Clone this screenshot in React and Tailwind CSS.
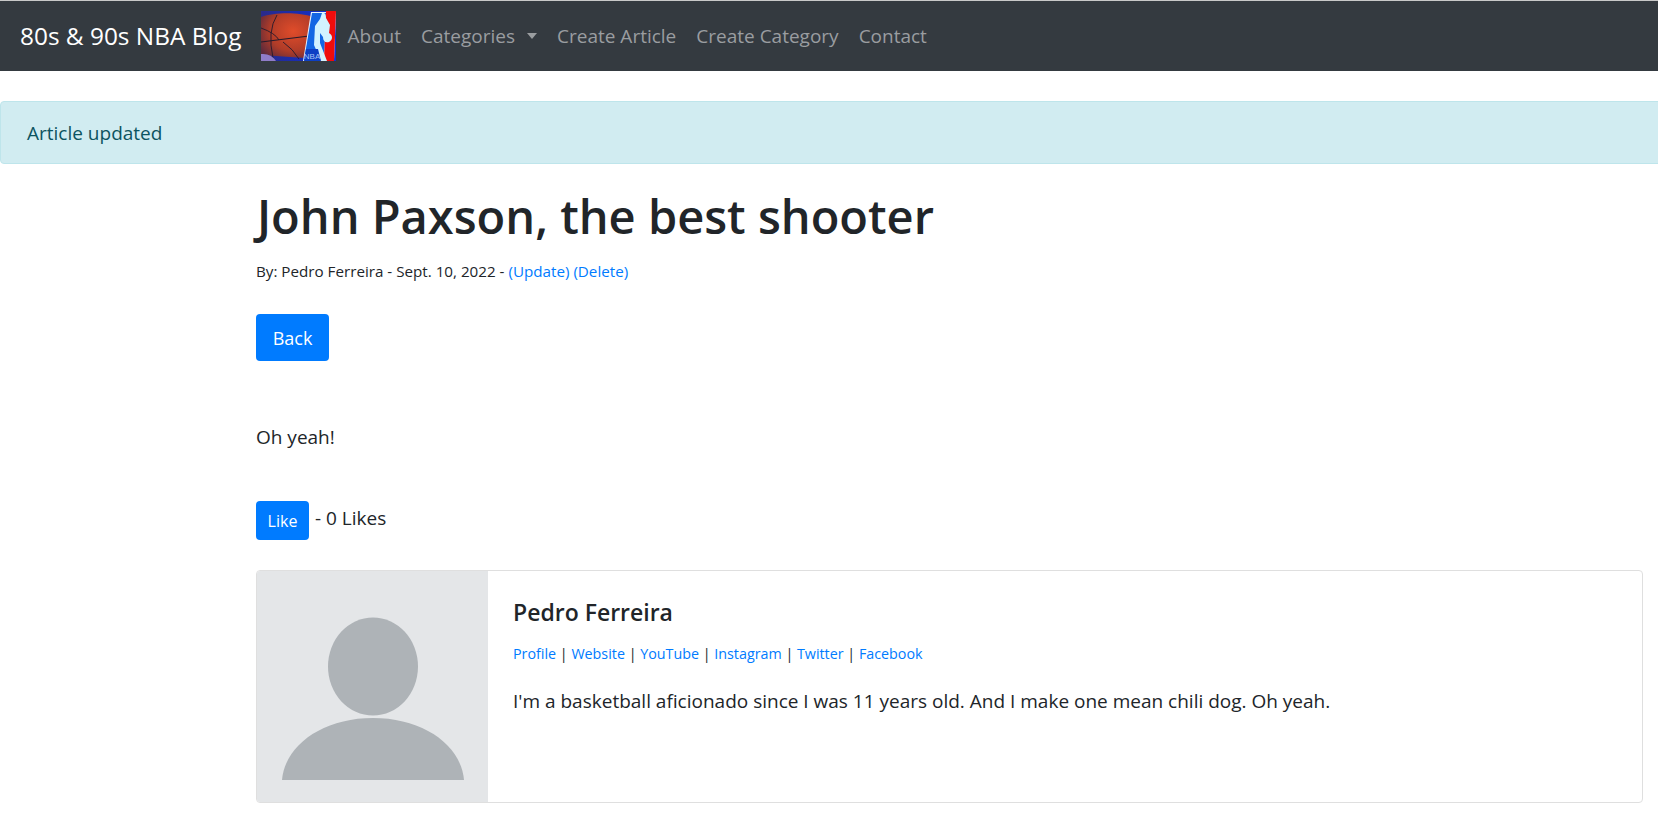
const font = { fontFamily: '"Open Sans", "Noto Sans", sans-serif' };

function Logo() {
  return (
    <svg width="75" height="50" viewBox="0 0 75 50" className="block shrink-0">
      <defs>
        <linearGradient id="bg" x1="0" y1="0" x2="1" y2="0">
          <stop offset="0" stopColor="#2a2a8a" />
          <stop offset="1" stopColor="#0a30d8" />
        </linearGradient>
        <radialGradient id="ball" cx="0.62" cy="0.4" r="0.75">
          <stop offset="0" stopColor="#e04c2a" />
          <stop offset="0.6" stopColor="#b03c28" />
          <stop offset="1" stopColor="#5c2a3c" />
        </radialGradient>
      </defs>
      <rect width="75" height="50" fill="url(#bg)" />
      <path d="M0 6 C14 1 38 1 52 6 L44 47 L0 44 Z" fill="url(#ball)" />
      <path d="M0 31 L48 25" stroke="#241a2c" strokeWidth="1.2" fill="none" />
      <path d="M16 4 Q6 20 12 47 M0 17 Q14 22 18 29 M22 31 Q32 38 38 48" stroke="#241a2c" strokeWidth="0.9" fill="none" />
      <path d="M0 43 Q10 42 15 50 H0 Z" fill="#8f7cc8" />
      <path d="M50 1 H75 L73 50 H42 Z" fill="#e8f4ff" />
      <path d="M51 2 H65 L63 49 H43 Z" fill="#1366e4" />
      <path d="M65 0 H75 L73 50 H63 Z" fill="#f00c0c" />
      <path d="M61 2 C64 1 65 4 65 7 L69 14 L68 22 C72 24 72 29 68 31 C64 32 62 30 62 26 L59 22 L59 32 L66 50 L60 50 L53 34 L54 15 L59 8 Z" fill="#d2f2ff" />
      <path d="M45 38 H57 L60 50 H43 Z" fill="#0d3fc4" />
      <text x="51" y="47.500" textAnchor="middle" fontSize="8" fill="#a8c4f4" fontFamily="Liberation Sans, sans-serif">NBA</text>
    </svg>
  );
}

function Avatar() {
  return (
    <div className="w-[231px] shrink-0 bg-[#e4e6e8] rounded-l-[3px]">
      <svg width="231" height="231" viewBox="0 0 231 231" className="block">
        <ellipse cx="116" cy="95.500" rx="45" ry="49" fill="#aeb3b7" />
        <path d="M25 209 C28 174 66 147 116 147 C166 147 204 174 207 209 Z" fill="#aeb3b7" />
      </svg>
    </div>
  );
}

export default function App() {
  return (
    <div className="min-h-[826px] overflow-x-hidden bg-white text-[#212529] text-[16px] leading-[24px]" style={font}>
      <nav className="h-[71px] bg-[#343a40] border-t border-[#c9c9c9] flex items-center pl-[20px]">
        <a className="text-white text-[24.4px] mr-[19px]">80s &amp; 90s NBA Blog</a>
        <Logo />
        <div className="flex items-center gap-[20px] ml-[12px] text-[19px] text-[#9a9da0]">
          <a>About</a>
          <a className="flex items-center">Categories<span className="ml-[12px] w-0 h-0 border-x-[5.5px] border-x-transparent border-t-[6px] border-t-[#9a9da0]"></span></a>
          <a>Create Article</a>
          <a>Create Category</a>
          <a>Contact</a>
        </div>
      </nav>

      <div className="mt-[30px] -mr-[10px] h-[63px] bg-[#d1ecf1] border border-[#bee5eb] rounded-[4px] text-[#0c5460] flex items-center pl-[26px] text-[19px]">
        Article updated
      </div>

      <main className="pl-[256px] pr-[15px]">
        <h1 className="text-[47px] leading-[58px] font-semibold mt-[23px] pl-[1px] text-[#212529]">John Paxson, the best shooter</h1>
        <p className="text-[15.2px] leading-[21px] mt-[16px]">
          By: Pedro Ferreira - Sept. 10, 2022 - <a className="text-[#007bff]">(Update)</a> <a className="text-[#007bff]">(Delete)</a>
        </p>
        <a className="mt-[32px] flex items-center justify-center w-[73px] h-[47px] rounded-[4px] bg-[#007bff] text-white text-[18px]">Back</a>
        <p className="mt-[63px] text-[19px] leading-[27px]">Oh yeah!</p>
        <div className="mt-[50px] flex items-start">
          <a className="flex items-center justify-center w-[53px] h-[39px] rounded-[4px] bg-[#007bff] text-white text-[16px]">Like</a>
          <span className="ml-[6px] text-[19px] leading-[27px] mt-[4px]">- 0 Likes</span>
        </div>
        <div className="mt-[30px] h-[233px] flex border border-[#dfdfdf] rounded-[4px]">
          <Avatar />
          <div className="pl-[25px] pt-[26px]">
            <h5 className="text-[23px] leading-[30px] font-semibold">Pedro Ferreira</h5>
            <p className="text-[14.3px] leading-[21px] mt-[16px]">
              <a className="text-[#007bff]">Profile</a> | <a className="text-[#007bff]">Website</a> | <a className="text-[#007bff]">YouTube</a> | <a className="text-[#007bff]">Instagram</a> | <a className="text-[#007bff]">Twitter</a> | <a className="text-[#007bff]">Facebook</a>
            </p>
            <p className="text-[19px] leading-[27px] mt-[24px]">I'm a basketball aficionado since I was 11 years old. And I make one mean chili dog. Oh yeah.</p>
          </div>
        </div>
      </main>
    </div>
  );
}
